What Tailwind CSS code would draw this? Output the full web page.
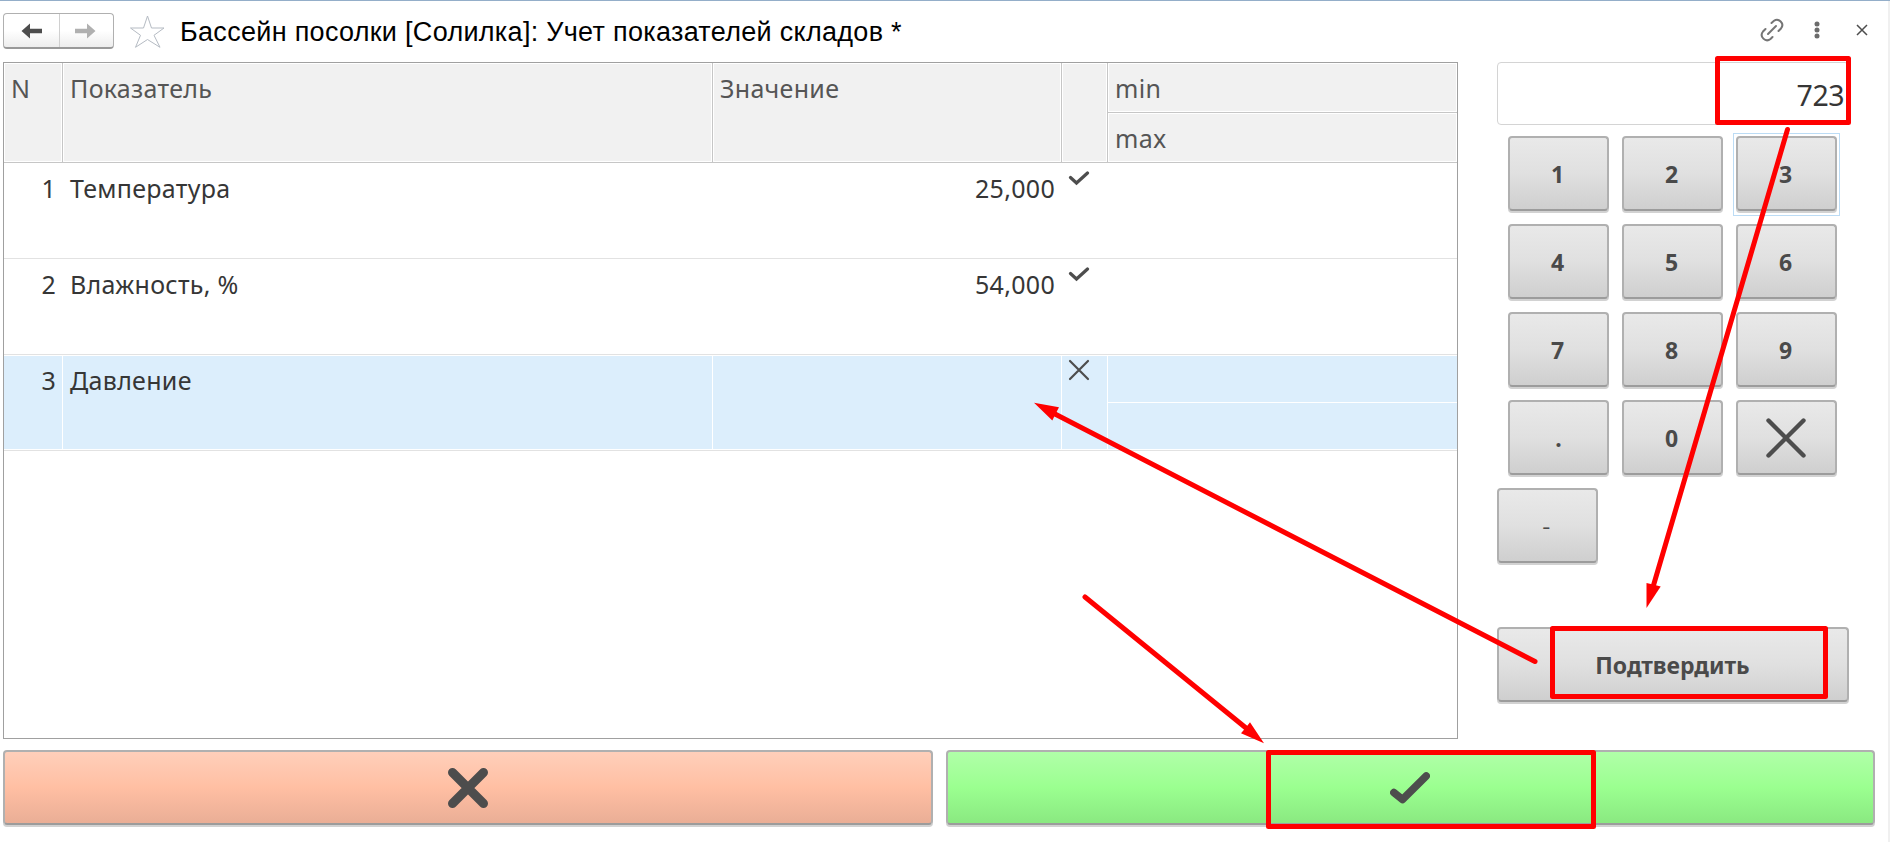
<!DOCTYPE html>
<html lang="ru">
<head>
<meta charset="utf-8">
<title>Учет показателей складов</title>
<script src="https://cdn.jsdelivr.net/npm/@tailwindcss/browser@4"></script>
</head>
<body class="bg-white">
<div class="relative flex h-[842px] w-[1890px] flex-col overflow-hidden border-t border-[#94aec9] bg-white font-['Noto_Sans','Open_Sans',sans-serif] text-[25px] leading-[34px] text-[#363636]">
  <div class="absolute right-0 top-0 h-full w-[2px] bg-[#f0f0f0]"></div>

  <header class="flex h-[61px] shrink-0 items-start pl-[3px]">
    <div class="mt-3 flex h-9 w-[111px] rounded-[4px] border border-b-2 border-[#b0b0b0] border-b-[#999] bg-linear-to-b from-white from-50% to-[#ededed]">
      <div class="flex w-[56px] items-center justify-center border-r border-[#d0d0d0]">
        <svg class="h-4 w-[22px]" viewBox="0 0 22 16"><path d="M0.500 8 9 0.500V5.800H21V10.200H9V15.500Z" fill="#4d4d4d"/></svg>
      </div>
      <div class="flex flex-1 items-center justify-center">
        <svg class="mr-[4px] h-4 w-[22px]" viewBox="0 0 22 16"><path d="M21.500 8 13 0.500V5.800H1V10.200H13V15.500Z" fill="#b0b0b0"/></svg>
      </div>
    </div>
    <svg class="ml-[15px] mt-[13px] h-[36px] w-[37px]" viewBox="0 0 37 36"><path d="M18.500 2 22.500 14H35L25 21.300 31 33.300 18.500 25.500 6.500 33.300 11.500 21.300 1.500 14H14.500Z" fill="#fff" stroke="#b5bbc3" stroke-width="1"/></svg>
    <h1 class="ml-[14px] mt-[15px] whitespace-nowrap font-['Liberation_Sans',Arial,sans-serif] text-[27px] leading-[32px] tracking-[0.300px] text-black">Бассейн посолки [Солилка]: Учет показателей складов *</h1>
    <div class="ml-auto mr-[20px] mt-[17px] flex items-center">
      <svg class="h-6 w-6" viewBox="0 0 24 24" fill="none" stroke="#757575" stroke-width="2" stroke-linecap="round"><path d="M8 16 16 8"/><path d="M11.500 5 14 2.800C18.500-.500 25 5.500 21 10.500L18.500 13"/><path d="M5.500 11 3 13.500C-1 18.500 5.500 25 10.500 21L12.500 19"/></svg>
      <svg class="ml-[26px] h-6 w-[14px]" viewBox="0 0 14 24" fill="#6b6b6b"><circle cx="7" cy="6" r="2.500"/><circle cx="7" cy="12" r="2.500"/><circle cx="7" cy="18" r="2.500"/></svg>
      <svg class="ml-[30px] h-6 w-[16px]" viewBox="0 0 16 24" stroke="#4d4d4d" stroke-width="1.500"><path d="M3 7 13 17M13 7 3 17"/></svg>
    </div>
  </header>

  <main class="flex h-[688px] shrink-0 items-start pl-[3px]">
    <section class="flex h-[677px] w-[1455px] flex-col border border-[#a0a0a0] tracking-[0.300px]">
      <div class="flex h-[100px] shrink-0 border-b border-[#c6c6c6] text-[#555]">
        <div class="w-[59px] border-r border-[#c6c6c6]"><div class="h-full border border-white bg-[#f1f1f1] pl-[6px] pt-[7px]">N</div></div>
        <div class="w-[650px] border-r border-[#c6c6c6]"><div class="h-full border border-white bg-[#f1f1f1] pl-[6px] pt-[7px]">Показатель</div></div>
        <div class="w-[349px] border-r border-[#c6c6c6]"><div class="h-full border border-white bg-[#f1f1f1] pl-[6px] pt-[7px]">Значение</div></div>
        <div class="w-[46px] border-r border-[#c6c6c6]"><div class="h-full border border-white bg-[#f1f1f1]"></div></div>
        <div class="flex flex-1 flex-col">
          <div class="h-[50px] border-b border-[#c6c6c6]"><div class="h-full border border-white bg-[#f1f1f1] pl-[6px] pt-[7px]">min</div></div>
          <div class="flex-1 border border-white bg-[#f1f1f1] pl-[6px] pt-[7px]">max</div>
        </div>
      </div>
      <div class="flex h-24 shrink-0 border-b border-[#e2e2e2] pt-2">
        <div class="w-[59px] pr-[7px] text-right">1</div>
        <div class="w-[650px] pl-[7px]">Температура</div>
        <div class="w-[349px] pr-[7px] text-right">25,000</div>
        <div class="w-[46px] pl-[6px]"><svg class="h-[16px] w-[22px]" viewBox="0 0 22 16" fill="none" stroke="#4d4d4d" stroke-width="3.200" stroke-linecap="round"><path d="M2.500 6.500 8.500 12 19.500 2"/></svg></div>
      </div>
      <div class="flex h-24 shrink-0 border-b border-[#e2e2e2] pt-2">
        <div class="w-[59px] pr-[7px] text-right">2</div>
        <div class="w-[650px] pl-[7px]">Влажность, %</div>
        <div class="w-[349px] pr-[7px] text-right">54,000</div>
        <div class="w-[46px] pl-[6px]"><svg class="h-[16px] w-[22px]" viewBox="0 0 22 16" fill="none" stroke="#4d4d4d" stroke-width="3.200" stroke-linecap="round"><path d="M2.500 6.500 8.500 12 19.500 2"/></svg></div>
      </div>
      <div class="h-24 shrink-0 border-b border-[#e2e2e2]">
        <div class="flex h-[95px] border-y border-white bg-[#dceefc]">
          <div class="w-[59px] border-r border-white pr-[6px] pt-[7px] text-right">3</div>
          <div class="w-[650px] border-r border-white pl-[7px] pt-[7px]">Давление</div>
          <div class="w-[349px] border-r border-white"></div>
          <div class="w-[46px] border-r border-white pl-[6px] pt-[3px]"><svg class="h-[22px] w-[22px]" viewBox="0 0 22 22" stroke="#4d4d4d" stroke-width="2.200" stroke-linecap="round"><path d="M2 2 20 20M20 2 2 20"/></svg></div>
          <div class="flex-1"><div class="h-[47px] border-b border-white"></div></div>
        </div>
      </div>
    </section>

    <aside class="ml-[39px] w-[352px] font-bold text-[#4a4a4a]">
      <div class="h-[63px] rounded-[4px] border border-[#d4d4d4] pr-[4px] pt-[15px] text-right text-[28.500px] font-normal leading-[34px] tracking-[-0.500px] text-[#363636]">723</div>
      <div class="ml-[11px] mt-[11px] grid grid-cols-[repeat(3,101px)] gap-x-[13px] gap-y-[13px] text-[23px]">
        <button class="flex h-[75px] items-center justify-center rounded-[4px] border-2 border-[#b0b0b0] border-b-[#9c9c9c] bg-linear-to-b from-[#e9e9e9] via-[#e0e0e0] to-[#cfcfcf] pr-[2px] shadow-[0_2px_0_#d2d2d2]">1</button>
        <button class="flex h-[75px] items-center justify-center rounded-[4px] border-2 border-[#b0b0b0] border-b-[#9c9c9c] bg-linear-to-b from-[#e9e9e9] via-[#e0e0e0] to-[#cfcfcf] pr-[2px] shadow-[0_2px_0_#d2d2d2]">2</button>
        <button class="relative flex h-[75px] items-center justify-center rounded-[4px] border-2 border-[#b0b0b0] border-b-[#9c9c9c] bg-linear-to-b from-[#e9e9e9] via-[#e0e0e0] to-[#cfcfcf] pr-[2px] shadow-[0_2px_0_#d2d2d2]">3<span class="absolute -bottom-[7px] -left-[5px] -right-[5px] -top-[5px] border border-[#bcdcf5]"></span></button>
        <button class="flex h-[75px] items-center justify-center rounded-[4px] border-2 border-[#b0b0b0] border-b-[#9c9c9c] bg-linear-to-b from-[#e9e9e9] via-[#e0e0e0] to-[#cfcfcf] pr-[2px] shadow-[0_2px_0_#d2d2d2]">4</button>
        <button class="flex h-[75px] items-center justify-center rounded-[4px] border-2 border-[#b0b0b0] border-b-[#9c9c9c] bg-linear-to-b from-[#e9e9e9] via-[#e0e0e0] to-[#cfcfcf] pr-[2px] shadow-[0_2px_0_#d2d2d2]">5</button>
        <button class="flex h-[75px] items-center justify-center rounded-[4px] border-2 border-[#b0b0b0] border-b-[#9c9c9c] bg-linear-to-b from-[#e9e9e9] via-[#e0e0e0] to-[#cfcfcf] pr-[2px] shadow-[0_2px_0_#d2d2d2]">6</button>
        <button class="flex h-[75px] items-center justify-center rounded-[4px] border-2 border-[#b0b0b0] border-b-[#9c9c9c] bg-linear-to-b from-[#e9e9e9] via-[#e0e0e0] to-[#cfcfcf] pr-[2px] shadow-[0_2px_0_#d2d2d2]">7</button>
        <button class="flex h-[75px] items-center justify-center rounded-[4px] border-2 border-[#b0b0b0] border-b-[#9c9c9c] bg-linear-to-b from-[#e9e9e9] via-[#e0e0e0] to-[#cfcfcf] pr-[2px] shadow-[0_2px_0_#d2d2d2]">8</button>
        <button class="flex h-[75px] items-center justify-center rounded-[4px] border-2 border-[#b0b0b0] border-b-[#9c9c9c] bg-linear-to-b from-[#e9e9e9] via-[#e0e0e0] to-[#cfcfcf] pr-[2px] shadow-[0_2px_0_#d2d2d2]">9</button>
        <button class="flex h-[75px] items-center justify-center rounded-[4px] border-2 border-[#b0b0b0] border-b-[#9c9c9c] bg-linear-to-b from-[#e9e9e9] via-[#e0e0e0] to-[#cfcfcf] shadow-[0_2px_0_#d2d2d2]">.</button>
        <button class="flex h-[75px] items-center justify-center rounded-[4px] border-2 border-[#b0b0b0] border-b-[#9c9c9c] bg-linear-to-b from-[#e9e9e9] via-[#e0e0e0] to-[#cfcfcf] pr-[2px] shadow-[0_2px_0_#d2d2d2]">0</button>
        <button class="flex h-[75px] items-center justify-center rounded-[4px] border-2 border-[#b0b0b0] border-b-[#9c9c9c] bg-linear-to-b from-[#e9e9e9] via-[#e0e0e0] to-[#cfcfcf] pr-[1px] shadow-[0_2px_0_#d2d2d2]"><svg class="h-10 w-10" viewBox="0 0 40 40" stroke="#4d4d4d" stroke-width="4.400" stroke-linecap="round"><path d="M2.500 2.500 37.500 37.500M37.500 2.500 2.500 37.500"/></svg></button>
      </div>
      <button class="mt-[13px] flex h-[75px] w-[101px] items-center justify-center rounded-[4px] border-2 border-[#b0b0b0] border-b-[#9c9c9c] bg-linear-to-b from-[#e9e9e9] via-[#e0e0e0] to-[#cfcfcf] pr-[2px] pt-[3px] text-[20px] font-normal shadow-[0_2px_0_#d2d2d2]"><span class="scale-x-125">-</span></button>
      <button class="mt-[64px] flex h-[75px] w-full items-center justify-center rounded-[4px] border-2 border-[#b0b0b0] border-b-[#9c9c9c] bg-linear-to-b from-[#e9e9e9] via-[#e0e0e0] to-[#cfcfcf] pr-[1px] text-[23px] shadow-[0_2px_0_#d2d2d2]">Подтвердить</button>
    </aside>
  </main>

  <footer class="flex gap-[13px] pl-[3px]">
    <button class="flex h-[75px] w-[930px] items-center justify-center rounded-[4px] border-2 border-[#b0b0b0] border-b-[#9c9c9c] bg-linear-to-b from-[#ffcfba] via-[#ffbfa3] to-[#eaae96] shadow-[0_2px_0_#d2d2d2]"><svg class="h-10 w-10" viewBox="0 0 40 40" stroke="#4d4d4d" stroke-width="9" stroke-linecap="round"><path d="M4.500 4.500 35.500 35.500M35.500 4.500 4.500 35.500"/></svg></button>
    <button class="flex h-[75px] w-[929px] items-center justify-center rounded-[4px] border-2 border-[#b0b0b0] border-b-[#9c9c9c] bg-linear-to-b from-[#b0ffa8] via-[#9bff90] to-[#8ae981] pr-[1px] shadow-[0_2px_0_#d2d2d2]"><svg class="h-10 w-10" viewBox="0 0 40 40" fill="none" stroke="#4d4d4d" stroke-width="7.500" stroke-linecap="round" stroke-linejoin="round"><path d="M3.800 24.500 12.500 31.500 36.200 8"/></svg></button>
  </footer>

  <!-- Step annotations over the form -->
  <svg class="pointer-events-none absolute -top-px left-0 h-[842px] w-[1890px]" viewBox="0 0 1890 842" fill="none" stroke="#f00" stroke-width="5" stroke-linejoin="round" stroke-linecap="round">
    <rect x="1717.500" y="58.500" width="131" height="64"/>
    <rect x="1552.500" y="628.500" width="273" height="68"/>
    <rect x="1268.500" y="752.500" width="325" height="74"/>
    <path d="M1787.500 129.500 1653 587M1535 661.500 1055 414M1085 597 1246 728"/>
    <g fill="#f00" stroke="none">
      <path d="M1646.500 608V583L1653 584.500 1660.700 586.500Z"/>
      <path d="M1034 402.800 1059 407.300 1055.500 414 1052.300 420.500Z"/>
      <path d="M1264 743.200 1250 722.300 1245.500 728 1241 733.300Z"/>
    </g>
  </svg>
</div>
</body>
</html>
